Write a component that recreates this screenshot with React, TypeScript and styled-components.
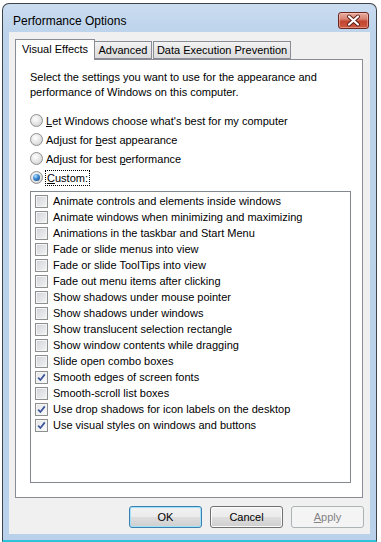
import React from "react";
import styled, { createGlobalStyle } from "styled-components";

const GlobalStyle = createGlobalStyle`
  html, body {
    margin: 0;
    padding: 0;
    background: #ffffff;
  }
  body {
    font-family: "Liberation Sans", Arial, sans-serif;
    font-size: 11px;
    color: #000000;
  }
  * {
    box-sizing: border-box;
  }
`;

const effects = [
  { label: "Animate controls and elements inside windows", checked: false },
  { label: "Animate windows when minimizing and maximizing", checked: false },
  { label: "Animations in the taskbar and Start Menu", checked: false },
  { label: "Fade or slide menus into view", checked: false },
  { label: "Fade or slide ToolTips into view", checked: false },
  { label: "Fade out menu items after clicking", checked: false },
  { label: "Show shadows under mouse pointer", checked: false },
  { label: "Show shadows under windows", checked: false },
  { label: "Show translucent selection rectangle", checked: false },
  { label: "Show window contents while dragging", checked: false },
  { label: "Slide open combo boxes", checked: false },
  { label: "Smooth edges of screen fonts", checked: true },
  { label: "Smooth-scroll list boxes", checked: false },
  { label: "Use drop shadows for icon labels on the desktop", checked: true },
  { label: "Use visual styles on windows and buttons", checked: true },
];

const App = () => {
  return (
    <>
      <GlobalStyle />
      <Page>
        <Window>
          <TitleBar>
            <Title>Performance Options</Title>
            <CloseButton>
              <svg width="29" height="15" viewBox="0 0 29 15">
                <path d="M10 3.5 L19 11.5 M19 3.5 L10 11.5" stroke="#5a1a14" strokeWidth="4" strokeLinecap="round" />
                <path d="M10 3.5 L19 11.5 M19 3.5 L10 11.5" stroke="#ffffff" strokeWidth="2.2" strokeLinecap="round" />
              </svg>
            </CloseButton>
          </TitleBar>

          <Client>
            <TabStrip>
              <Tab $active $width={80}>Visual Effects</Tab>
              <Tab $width={57}>Advanced</Tab>
              <Tab $width={138} $gap={1}>Data Execution Prevention</Tab>
            </TabStrip>

            <Panel>
              <Intro>
                Select the settings you want to use for the appearance and
                <br />
                performance of Windows on this computer.
              </Intro>

              <RadioGroup>
                <RadioRow>
                  <Radio />
                  <span>
                    <U>L</U>et Windows choose what's best for my computer
                  </span>
                </RadioRow>
                <RadioRow>
                  <Radio />
                  <span>
                    Adjust for <U>b</U>est appearance
                  </span>
                </RadioRow>
                <RadioRow>
                  <Radio />
                  <span>
                    Adjust for best <U>p</U>erformance
                  </span>
                </RadioRow>
                <RadioRow>
                  <Radio $selected />
                  <Focused>
                    <U>C</U>ustom:
                  </Focused>
                </RadioRow>
              </RadioGroup>

              <ListBox>
                {effects.map((item) => (
                  <CheckRow key={item.label}>
                    <CheckBox $checked={item.checked}>
                      {item.checked && (
                        <svg width="9" height="9" viewBox="0 0 9 9">
                          <path d="M1.2 4.6 L3.4 7 L7.8 1.4" fill="none" stroke="#3b5496" strokeWidth="1.7" />
                        </svg>
                      )}
                    </CheckBox>
                    {item.label}
                  </CheckRow>
                ))}
              </ListBox>
            </Panel>

            <ButtonRow>
              <Button $default>OK</Button>
              <Button>Cancel</Button>
              <Button disabled>
                <U>A</U>pply
              </Button>
            </ButtonRow>
          </Client>
        </Window>
      </Page>
    </>
  );
};

export default App;

const Page = styled.div`
  width: 381px;
  height: 542px;
  padding: 3px 0 0 2px;
  overflow: hidden;
  background: #ffffff;
`;

const Window = styled.div`
  width: 375px;
  height: 539px;
  display: flex;
  flex-direction: column;
  padding: 0 6px 6px 6px;
  border: 1px solid #3f444b;
  border-bottom: 2px solid #2fc3d8;
  border-radius: 7px 7px 0 0;
  background: linear-gradient(#cadcf0 0px, #bcd3eb 30px, #b9d1ea 100%);
`;

const TitleBar = styled.div`
  height: 28px;
  padding-top: 5px;
  display: flex;
  align-items: center;
  justify-content: space-between;
`;

const Title = styled.div`
  padding-left: 4px;
  font-size: 12px;
  color: #000000;
`;

const CloseButton = styled.div`
  width: 31px;
  height: 17px;
  margin-right: 1px;
  display: flex;
  align-items: center;
  justify-content: center;
  border: 1px solid #6a2620;
  border-radius: 3px;
  background: linear-gradient(#e9ada0 0%, #d98474 40%, #c4452f 55%, #cc5a43 100%);
  box-shadow: inset 0 0 0 1px rgba(255, 210, 200, 0.45);
`;

const Client = styled.div`
  flex: 1;
  display: flex;
  flex-direction: column;
  padding: 7px 6px 5px 6px;
  background: #f0f0f0;
`;

const TabStrip = styled.div`
  height: 20px;
  display: flex;
  align-items: flex-end;
  position: relative;
  z-index: 1;
`;

const Tab = styled.div<{ $active?: boolean; $width: number; $gap?: number }>`
  width: ${(p) => p.$width}px;
  height: ${(p) => (p.$active ? 21 : 18)}px;
  margin-left: ${(p) => p.$gap ?? 0}px;
  margin-bottom: ${(p) => (p.$active ? -1 : 0)}px;
  display: flex;
  align-items: center;
  justify-content: center;
  padding-bottom: ${(p) => (p.$active ? 2 : 0)}px;
  border: 1px solid #898c95;
  border-bottom: ${(p) => (p.$active ? "none" : "1px solid #898c95")};
  border-left: ${(p) => (p.$active || p.$gap ? "1px solid #898c95" : "none")};
  background: ${(p) => (p.$active ? "#ffffff" : "linear-gradient(#f3f3f3, #e6e6e6 50%, #dcdcdc)")};
  white-space: nowrap;
`;

const Panel = styled.div`
  height: 439px;
  margin-right: 1px;
  display: flex;
  flex-direction: column;
  padding: 10px 11px 0 14px;
  border: 1px solid #898c95;
  background: #ffffff;
`;

const Intro = styled.div`
  line-height: 15px;
`;

const RadioGroup = styled.div`
  margin-top: 11px;
  display: flex;
  flex-direction: column;
`;

const RadioRow = styled.div`
  height: 19px;
  display: flex;
  align-items: center;
  gap: 3px;
`;

const Radio = styled.span<{ $selected?: boolean }>`
  width: 13px;
  height: 13px;
  flex: none;
  display: flex;
  align-items: center;
  justify-content: center;
  border: 1px solid #8e8f8f;
  border-radius: 50%;
  background: radial-gradient(circle at 40% 35%, #ffffff 0%, #e8e8e8 45%, #c9c9c9 100%);

  &::after {
    content: "";
    display: ${(p) => (p.$selected ? "block" : "none")};
    width: 7px;
    height: 7px;
    border-radius: 50%;
    background: radial-gradient(circle at 35% 30%, #b4e2ff 0%, #3f8ed8 40%, #163c78 100%);
  }
`;

const Focused = styled.span`
  outline: 1px dotted #000000;
  outline-offset: 0;
  padding: 0 1px;
  line-height: 14px;
`;

const U = styled.span`
  text-decoration: underline;
`;

const ListBox = styled.div`
  margin-top: 4px;
  height: 292px;
  display: flex;
  flex-direction: column;
  padding: 1px 0 0 4px;
  border: 1px solid #828790;
  background: #ffffff;
`;

const CheckRow = styled.div`
  height: 16px;
  display: flex;
  align-items: center;
  gap: 5px;
  white-space: nowrap;
`;

const CheckBox = styled.span<{ $checked?: boolean }>`
  width: 13px;
  height: 13px;
  flex: none;
  display: flex;
  align-items: center;
  justify-content: center;
  border: 1px solid #8e8f8f;
  background: ${(p) =>
    p.$checked
      ? "linear-gradient(135deg, #e4e6ea, #fbfbfb)"
      : "linear-gradient(135deg, #cfd2d7, #f5f5f5)"};
  box-shadow: inset 0 0 0 1px #f4f4f4;
`;

const ButtonRow = styled.div`
  margin-top: 8px;
  display: flex;
  justify-content: flex-end;
  gap: 8px;
`;

const Button = styled.button<{ $default?: boolean }>`
  width: 73px;
  height: 22px;
  padding: 0;
  font-family: "Liberation Sans", Arial, sans-serif;
  font-size: 11px;
  color: #000000;
  border: 1px solid ${(p) => (p.$default ? "#3c7fb1" : "#707070")};
  border-radius: 3px;
  background: linear-gradient(#f2f2f2 0%, #ebebeb 50%, #dddddd 51%, #cfcfcf 100%);
  box-shadow: inset 0 0 0 1px ${(p) => (p.$default ? "#9fe2fa" : "#fbfbfb")};

  &:disabled {
    color: #838383;
    border-color: #adb2b5;
    background: #f4f4f4;
    box-shadow: none;
  }
`;
